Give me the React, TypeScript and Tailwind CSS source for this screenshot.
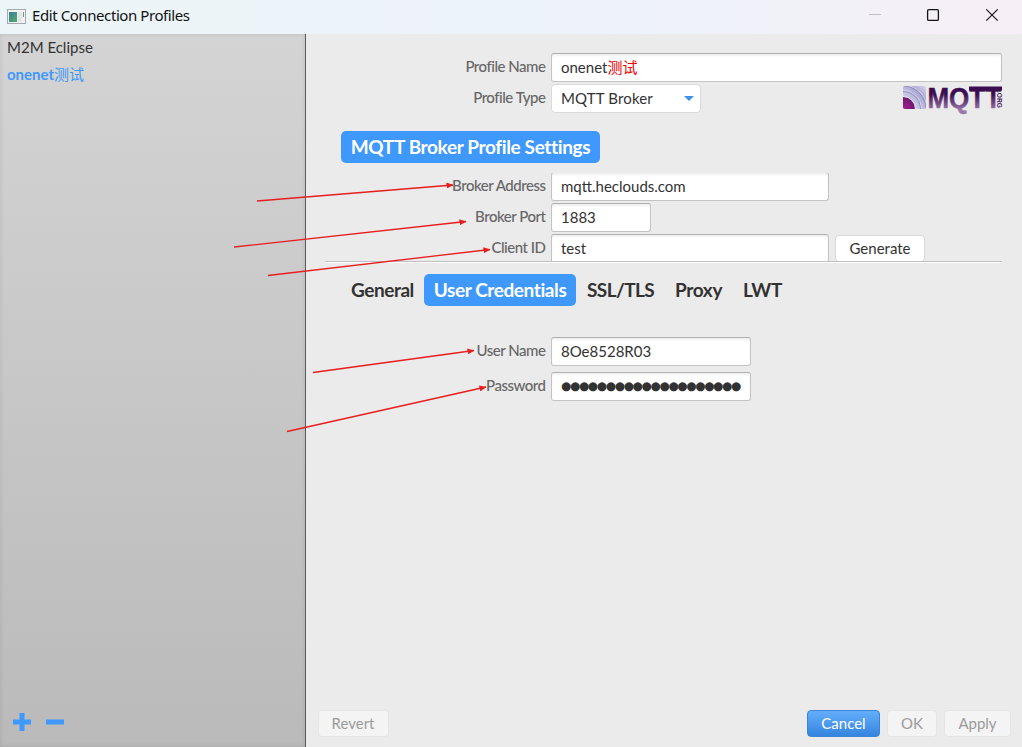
import type { ReactNode } from "react";
import clsx from "clsx";

const profiles = [
  { name: "M2M Eclipse", cjk: "", selected: false },
  { name: "onenet", cjk: "测试", selected: true },
];

const tabs = [
  { label: "General", className: "w-[68px] tracking-[-0.45px]" },
  { label: "User Credentials", className: "w-[152px] justify-center tracking-[-0.4px]" },
  { label: "SSL/TLS", className: "ml-[6px] w-[83px] tracking-[-0.6px]" },
  { label: "Proxy", className: "w-[63px] tracking-[-0.35px]" },
  { label: "LWT", className: "w-[44px] tracking-[-0.3px]" },
];

// [x1, y1, x2, y2] of each annotation arrow
const arrows = [
  [257, 201, 453, 185],
  [234, 247, 466, 221.5],
  [268, 275.5, 490, 249.5],
  [313, 372.5, 474, 350.5],
  [287, 431.5, 486, 387],
];

function TitleBar() {
  return (
    <header className="flex h-[34px] shrink-0 items-center bg-linear-to-r from-[#ecf5f7] via-[#eef3fb] via-60% to-[#f6eff5] font-['Noto_Sans']">
      <svg className="-mt-px ml-[7px] h-[16px] w-[19px] shrink-0" viewBox="0 0 19 16">
        <defs>
          <linearGradient id="appIcon" x1="0" y1="0" x2="1" y2="1">
            <stop offset="0" stopColor="#3f7d9d" />
            <stop offset="1" stopColor="#4fae68" />
          </linearGradient>
        </defs>
        <rect x="0.5" y="0.5" width="18" height="14" fill="#f2f4f4" stroke="#a3a9ad" />
        <rect x="2" y="3" width="8" height="10" fill="url(#appIcon)" />
        <rect x="11" y="3" width="4" height="10" fill="#e3e6e4" />
        <rect x="16" y="3" width="1" height="5" fill="#5b9b93" />
      </svg>
      <span className="-mt-[5px] ml-[6px] text-[15px] leading-[20px] tracking-[-0.42px] text-[#111]">Edit Connection Profiles</span>
      <div className="ml-auto flex h-full items-center">
        <svg className="h-[34px] w-[153px]" viewBox="0 0 153 34" fill="none">
          <path d="M0 14.5h12" stroke="#bfc1c6" />
          <rect x="58.6" y="9.6" width="10.8" height="10.8" rx="1.2" stroke="#151515" strokeWidth="1.3" />
          <path d="M117.3 9.3l11.4 11.4M128.7 9.3l-11.4 11.4" stroke="#151515" strokeWidth="1.2" />
        </svg>
      </div>
    </header>
  );
}

function Sidebar() {
  return (
    <aside className="flex w-[306px] shrink-0 flex-col border-r border-[#5a5a5a] bg-linear-to-b from-[#d4d4d4] to-[#bababa] shadow-[inset_0_0_5px_rgba(0,0,0,0.1)]">
      <ul className="-mt-px text-[15px] leading-[27px]">
        {profiles.map((p) => (
          <li
            key={p.name}
            className={clsx("h-[27px] pl-[7px]", p.selected ? "font-bold text-[#3f98fb]" : "text-[#323232]")}
          >
            {p.name}
            <span className="font-['Noto_Sans_CJK_SC',sans-serif] font-normal">{p.cjk}</span>
          </li>
        ))}
      </ul>
      <svg className="mt-auto mb-[16px] ml-[13px] h-[18px] w-[52px]" viewBox="0 0 52 18" fill="#3f98fb">
        <path d="M6.5 0h5v6.5H18v5h-6.5V18h-5v-6.5H0v-5h6.5z" />
        <rect x="33" y="6.5" width="18" height="5" />
      </svg>
    </aside>
  );
}

function Label({ children }: { children: ReactNode }) {
  return (
    <label className="w-[239.5px] shrink-0 text-right text-[15px] leading-[27px] font-medium tracking-[-0.48px] text-[#666]">{children}</label>
  );
}

function Field({ label, width, children }: { label: string; width: string; children: ReactNode }) {
  return (
    <div className="flex">
      <Label>{label}</Label>
      <div
        className={clsx(
          "ml-[5.5px] flex h-[29px] shrink-0 items-center rounded-[3px] border border-[#c3c3c3] border-t-[#b0b0b0] bg-white pl-[9px] text-[15px] text-[#323232] shadow-[inset_0_2px_2px_rgba(0,0,0,0.06)]",
          width
        )}
      >
        {children}
      </div>
    </div>
  );
}

function MqttLogo() {
  return (
    <svg className="mt-[2px] mr-[19px] ml-auto h-[25px] w-[100px] overflow-visible" viewBox="0 0 100 25">
      <defs>
        <linearGradient id="mqttText" gradientUnits="userSpaceOnUse" x1="0" y1="0" x2="0" y2="24">
          <stop offset="0.35" stopColor="#3b0d50" />
          <stop offset="1" stopColor="#9a78ab" />
        </linearGradient>
        <linearGradient id="mqttBox" x1="0" y1="1" x2="1" y2="0">
          <stop offset="0.2" stopColor="#d6d6ea" />
          <stop offset="0.7" stopColor="#aaa8d4" />
          <stop offset="1" stopColor="#dcdbee" />
        </linearGradient>
        <radialGradient id="mqttDot" gradientUnits="userSpaceOnUse" cx="2" cy="21" r="13">
          <stop offset="0" stopColor="#9a1f8c" />
          <stop offset="1" stopColor="#5f1668" />
        </radialGradient>
        <clipPath id="mqttClip">
          <rect width="23" height="23" rx="2" />
        </clipPath>
      </defs>
      <g clipPath="url(#mqttClip)" fill="none">
        <rect width="23" height="23" fill="url(#mqttBox)" />
        <circle cx="0" cy="23" r="12.5" fill="url(#mqttDot)" stroke="#f4f4fa" />
        <circle cx="0" cy="23" r="17.5" stroke="#8785bb" strokeWidth="0.9" />
        <circle cx="0" cy="23" r="18.5" stroke="#d8d8ec" strokeWidth="0.8" />
        <circle cx="0" cy="23" r="23" stroke="#8785bb" strokeWidth="0.9" />
        <circle cx="0" cy="23" r="24" stroke="#d8d8ec" strokeWidth="0.8" />
      </g>
      <text x="24.5" y="21.5" fontFamily="Liberation Sans, sans-serif" fontWeight="700" fontSize="29" textLength="73.5" lengthAdjust="spacingAndGlyphs" fill="url(#mqttText)" stroke="url(#mqttText)" strokeWidth="0.5">
        MQTT
      </text>
      <rect x="66" y="0.5" width="33" height="4" fill="#3b0d50" />
      <text transform="translate(93.5 5) rotate(90)" fontFamily="Liberation Sans, sans-serif" fontSize="7.5" fontWeight="700" textLength="17" lengthAdjust="spacingAndGlyphs" fill="#4c2160">
        .ORG
      </text>
    </svg>
  );
}

function Button({ width, children }: { width: string; children: ReactNode }) {
  return (
    <button className={clsx("h-[27px] rounded-[4px] border border-[#e5e5e5] bg-[#f4f4f4] text-[15px] leading-[25px] text-[#9b9b9b]", width)}>{children}</button>
  );
}

function Arrows() {
  return (
    <svg className="pointer-events-none absolute inset-0 h-[747px] w-[1022px]" viewBox="0 0 1022 747">
      <defs>
        <marker id="head" markerWidth="7" markerHeight="6" refX="6.5" refY="3" orient="auto" markerUnits="userSpaceOnUse">
          <path d="M0 0l7 3-7 3z" fill="#e81e1e" />
        </marker>
      </defs>
      {arrows.map(([x1, y1, x2, y2]) => (
        <line key={y1} x1={x1} y1={y1} x2={x2} y2={y2} stroke="#e81e1e" strokeWidth="1.3" markerEnd="url(#head)" />
      ))}
    </svg>
  );
}

export default function App() {
  return (
    <div className="relative flex h-[747px] w-[1022px] flex-col overflow-hidden bg-[#ebebeb] font-[Lato,'Noto_Sans_CJK_SC',sans-serif]">
      <TitleBar />
      <div className="flex min-h-0 flex-1">
        <Sidebar />
        <main className="flex min-w-0 flex-1 flex-col">
          <div className="pt-[19px]">
            <Field label="Profile Name" width="w-[451px]">
              onenet<span className="font-['Noto_Sans_CJK_SC',sans-serif] text-[#f00000]">测试</span>
            </Field>
          </div>
          <div className="mt-[2px] flex">
            <Label>Profile Type</Label>
            <div className="ml-[5.5px] flex h-[29px] w-[150px] items-center justify-between rounded-[4px] border border-[#dadada] bg-white pr-[6px] pl-[9px] text-[15px] tracking-[0.15px] text-[#323232]">
              MQTT Broker
              <svg className="h-[5px] w-[10px]" viewBox="0 0 10 5">
                <path d="M0 0h10L5 5z" fill="#3f90e8" />
              </svg>
            </div>
            <MqttLogo />
          </div>

          <h1 className="mt-[18px] ml-[35px] flex h-[32px] w-[259px] items-center justify-center rounded-[5px] bg-[#3f98fb] text-[19px] font-bold tracking-[-0.36px] text-white">
            MQTT Broker Profile Settings
          </h1>

          {/* Broker settings, cut off by the split pane below */}
          <section className="mt-[10px] h-[89px] overflow-hidden">
            <div className="-mt-px flex flex-col gap-[2px]">
              <Field label="Broker Address" width="w-[278px]">mqtt.heclouds.com</Field>
              <Field label="Broker Port" width="w-[100px]">1883</Field>
              <div className="flex">
                <Field label="Client ID" width="w-[278px]">test</Field>
                <button className="mt-px ml-[6px] h-[27px] w-[90px] rounded-[4px] border border-[#dadada] bg-white text-[15px] text-[#323232]">
                  Generate
                </button>
              </div>
            </div>
          </section>
          <div className="-mt-px mr-[20px] ml-[19px] h-[2px] shrink-0 border-t border-[#c0c0c0] bg-white" />

          <nav className="mt-[11px] ml-[45px] flex h-[32px] gap-[5px]">
            {tabs.map((tab) => (
              <div
                key={tab.label}
                className={clsx(
                  "flex items-center text-[19px] font-bold",
                  tab.label === "User Credentials" ? "rounded-[5px] bg-[#3f98fb] text-white" : "text-[#323232]",
                  tab.className
                )}
              >
                {tab.label}
              </div>
            ))}
          </nav>

          <section className="mt-[31px] flex flex-col gap-[6px]">
            <Field label="User Name" width="w-[200px]">8Oe8528R03</Field>
            <Field label="Password" width="w-[200px]">
              <span className="font-['DejaVu_Sans'] text-[11.7px] leading-none tracking-[-1.25px]">{"●".repeat(20)}</span>
            </Field>
          </section>

          <footer className="mt-auto mb-[10px] flex h-[27px] pr-[11px] pl-[11.5px]">
            <Button width="w-[71px]">Revert</Button>
            <div className="ml-auto flex gap-[7px]">
              <button className="h-[27px] w-[73px] rounded-[4px] border border-[#3b85d4] bg-linear-to-b from-[#63aefc] to-[#3585de] text-[15px] text-white">
                Cancel
              </button>
              <Button width="w-[50px]">OK</Button>
              <Button width="w-[67px]">Apply</Button>
            </div>
          </footer>
        </main>
      </div>
      <Arrows />
    </div>
  );
}
